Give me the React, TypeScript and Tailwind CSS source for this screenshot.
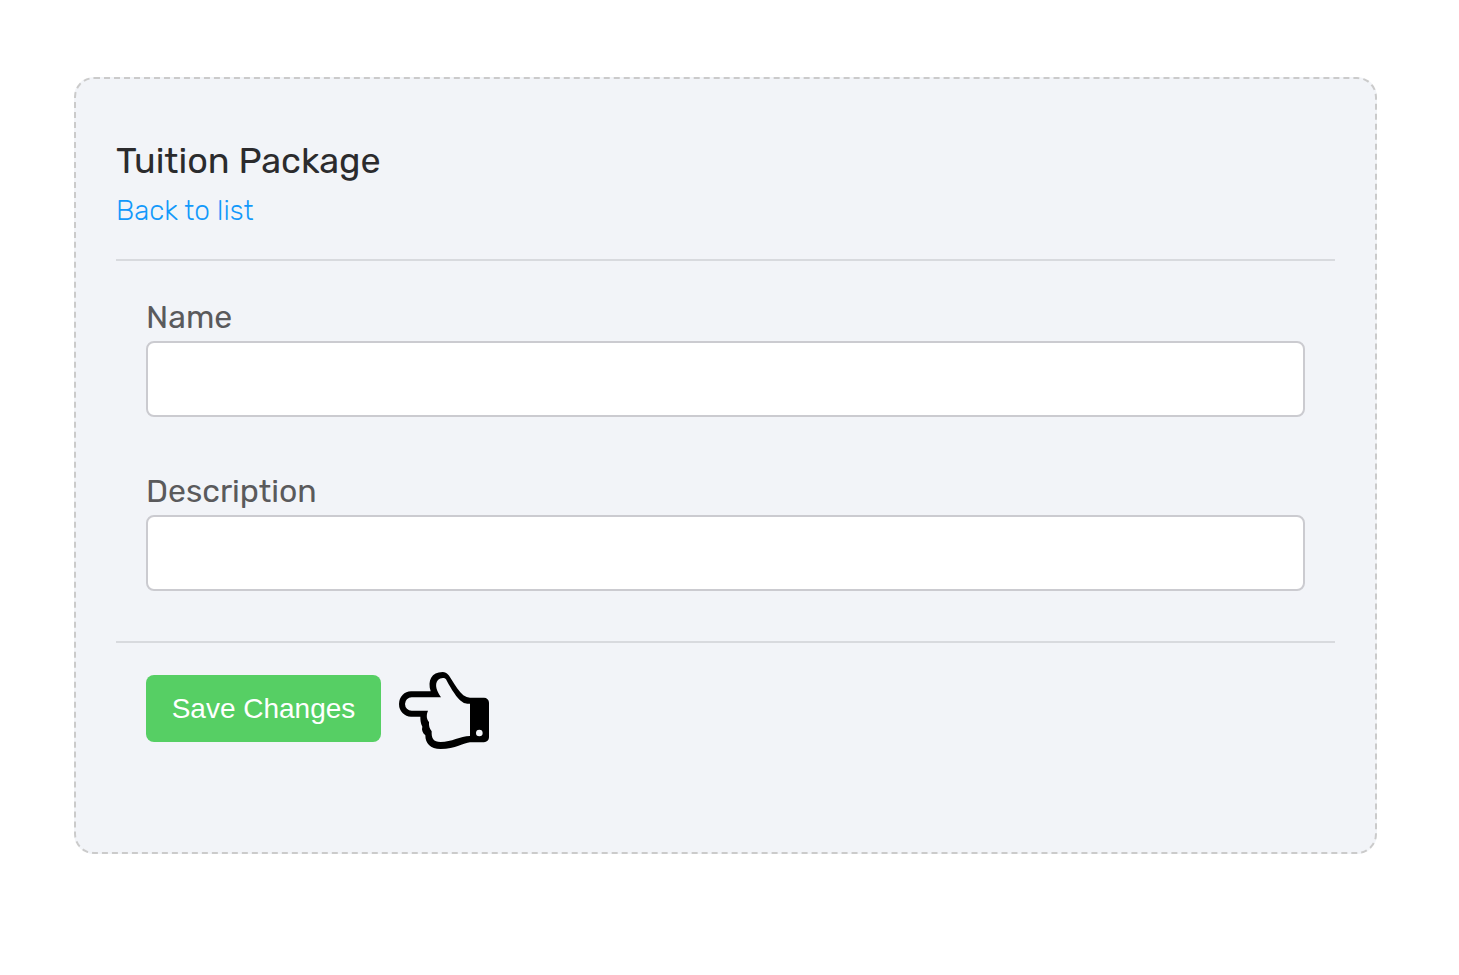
import { useState } from "react";

function PointingHand() {
  return (
    <svg className="ml-[18px] h-[81px] w-[90px] shrink-0" viewBox="27 24 270 243" fill="currentColor" aria-hidden="true">
      <path
        fillRule="evenodd"
        d="M63 94H122C112 62 124 36 158 36C172 36 178 48 184 58C196 78 208 96 220 106Q230 113 240 113H282A15 15 0 0 1 297 128V232A15 15 0 0 1 282 247H240C222 248 196 267 152 267C120 267 106 250 106 226C98 218 94 210 97 200C92 190 91 180 91 170H63A36 38 0 0 1 63 94ZM65 112H153C141 94 132 74 144 60C150 54 163 51 168 58C176 74 196 108 210 121Q220 131 232 131H240V228C210 229 185 246 152 246C130 246 124 236 125 214C119 206 116 198 117 186C110 178 108 166 114 152H65A20 20 0 0 1 65 112ZM268 209A10 10 0 1 0 268 229A10 10 0 1 0 268 209Z"
      />
    </svg>
  );
}

type FieldProps = {
  id: string;
  label: string;
  value: string;
  onChange: (value: string) => void;
};

function Field({ id, label, value, onChange }: FieldProps) {
  return (
    <div className="flex flex-col">
      <label htmlFor={id} className="mb-1 text-[32px] leading-10 text-[#5a5a5c]">{label}</label>
      <input
        id={id}
        type="text"
        value={value}
        onChange={(e) => onChange(e.target.value)}
        className="h-[76px] w-full rounded-lg border-2 border-[#cbcbd0] bg-white px-5 text-[28px] outline-none focus:border-[#1c96f8]"
      />
    </div>
  );
}

export default function App() {
  const [name, setName] = useState("");
  const [description, setDescription] = useState("");

  return (
    <div className="min-h-screen bg-white pt-[77px] pr-[82px] pb-[77px] pl-[74px] font-[Rubik,Roboto,sans-serif]">
      <form
        onSubmit={(e) => e.preventDefault()}
        className="rounded-[20px] border-2 border-dashed border-[#cbcbcb] bg-[#f2f4f8] px-10 pt-[60px] pb-[103px]"
      >
        <header className="border-b-2 border-[#d8dade] pb-[30px]">
          <h1 className="text-[36px] leading-[44px] text-[#2b2b2d]">Tuition Package</h1>
          <a href="#list" className="mt-[10px] block w-fit text-[28px] leading-9 font-light text-[#1299fb]">Back to list</a>
        </header>
        <div className="flex flex-col gap-[54px] px-[30px] pt-9 pb-[50px]">
          <Field id="name" label="Name" value={name} onChange={setName} />
          <Field id="description" label="Description" value={description} onChange={setDescription} />
        </div>
        <div className="flex items-center border-t-2 border-[#d8dade] px-[30px] pt-[25px]">
          <button
            type="submit"
            className="h-[67px] min-w-[235px] cursor-pointer rounded-lg bg-[#56cf64] px-[25px] font-['Liberation_Sans',Arial,sans-serif] text-[28px] text-white hover:bg-[#49bf57]"
          >
            Save Changes
          </button>
          <PointingHand />
        </div>
      </form>
    </div>
  );
}
